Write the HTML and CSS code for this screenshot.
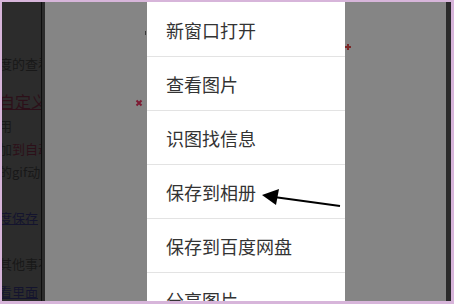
FILE: index.html
```html
<!DOCTYPE html>
<html lang="zh-CN">
<head>
<meta charset="utf-8">
<title>Menu</title>
<link rel="stylesheet" href="styles.css">
</head>
<body>
<div class="page">
  <div class="frame">
    <div class="left">
      <div class="left-content">
        <div class="ln first">度的查看</div>
        <div class="ln big maroon">自定义</div>
        <div class="ln">用</div>
        <div class="ln">加<span class="maroon">到自动</span></div>
        <div class="ln">的gif动图</div>
        <div class="ln gap link">度保存</div>
        <div class="ln gap">其他事不</div>
        <div class="ln near link">看里面</div>
      </div>
    </div>
    <div class="vline"></div>
    <div class="ldark"></div>
    <div class="shade"></div>
    <div class="menu">
      <div class="item">新窗口打开</div>
      <div class="item">查看图片</div>
      <div class="item">识图找信息</div>
      <div class="item">保存到相册</div>
      <div class="item">保存到百度网盘</div>
      <div class="item">分享图片</div>
    </div>
    <div class="shade shade-r"></div>
    <div class="rdark"></div>
  </div>
  <svg class="overlay" width="454" height="304" viewBox="0 0 454 304">
    <line x1="340" y1="206" x2="274" y2="197" stroke="#000" stroke-width="2"/>
    <polygon points="262,195 279,189 276,205" fill="#000"/>
    <path d="M136.5 100.5 L141.5 105.5 M141.5 100.5 L136.5 105.5" stroke="#7d1b33" stroke-width="2"/>
    <path d="M345 47 L351 47 M348 44 L348 50" stroke="#7a2626" stroke-width="2"/>
    <rect x="145" y="31" width="1" height="4" fill="#3a3a3a"/>
  </svg>
</div>
</body>
</html>
```
FILE: styles.css
```css
* { box-sizing: border-box; }
html, body { margin: 0; padding: 0; }
body {
  width: 454px;
  height: 304px;
  overflow: hidden;
  background: #d7b5da;
  font-family: "Noto Sans CJK SC", "Noto Sans", sans-serif;
}
.page {
  position: relative;
  width: 454px;
  height: 304px;
}
.frame {
  width: 454px;
  height: 304px;
  border-style: solid;
  border-color: #d7b5da;
  border-width: 2px 3px 3px 2px;
  display: flex;
  overflow: hidden;
}
.left {
  width: 39px;
  background: #2c2c2c;
  overflow: hidden;
  flex: none;
}
.left-content {
  margin-left: -3px;
  padding-top: 50px;
  color: #181818;
  font-size: 13px;
  white-space: nowrap;
}
.ln { height: 23px; line-height: 23px; }
.ln.big { font-size: 16px; height: 26px; line-height: 26px; margin-top: 13px; text-decoration: underline; }
.ln.gap { margin-top: 23px; }
.ln.near { margin-top: 5px; }
.maroon { color: #2c1019; }
.link { color: #14142e; text-decoration: underline; }
.vline { width: 1px; background: #0e0e0e; flex: none; }
.ldark { width: 3px; background: #2c2c2c; flex: none; }
.shade { width: 102px; background: #858585; flex: none; }
.shade-r { width: 101px; }
.rdark { width: 5px; background: #2a2a2a; flex: none; }
.menu {
  width: 198px;
  flex: none;
  background: #fff;
  padding-top: 1px;
}
.item {
  height: 54px;
  border-bottom: 1px solid #e3e3e3;
  padding: 15px 0 0 19px;
  font-size: 18px;
  line-height: 24px;
  color: #333;
  white-space: nowrap;
}
.overlay {
  position: absolute;
  left: 0;
  top: 0;
}
```
